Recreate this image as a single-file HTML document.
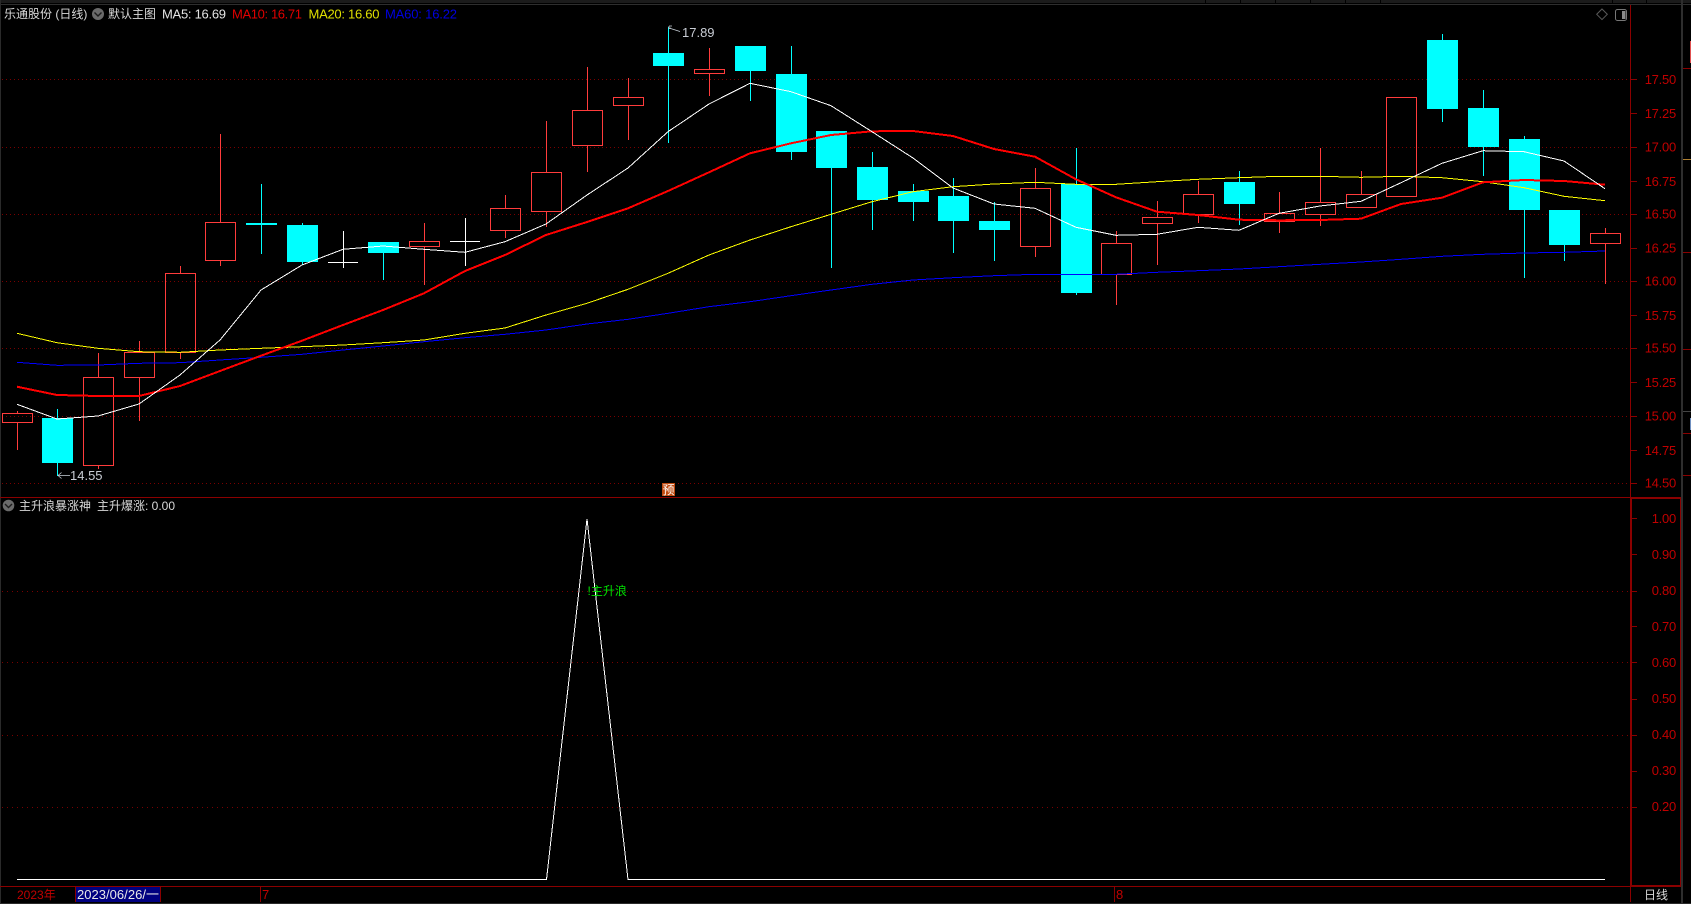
<!DOCTYPE html>
<html><head><meta charset="utf-8"><style>
html,body{margin:0;padding:0;background:#000;width:1691px;height:904px;overflow:hidden}
svg{display:block}
text{font-family:"Liberation Sans","Noto Sans CJK SC",sans-serif;font-size:13px}
.c{font-size:12px}
.ax text{fill:#c00000;text-anchor:end;letter-spacing:-.25px}
</style></head><body>
<svg width="1691" height="904" viewBox="0 0 1691 904" xmlns="http://www.w3.org/2000/svg">
<rect width="1691" height="904" fill="#000"/>
<g shape-rendering="crispEdges">
<!-- frame -->
<rect x="0" y="0" width="1691" height="3" fill="#1b1b1b"/>
<rect x="0" y="4" width="1691" height="1" fill="#2e2e2e"/>
<path d="M1612.5 0V3M1646.5 0V3M1681.5 0V3M1380.5 0V3M1345.5 0V3M1310.5 0V3M1275.5 0V3M1240.5 0V3M1205.5 0V3" stroke="#000"/>
<rect x="0" y="0" width="1" height="904" fill="#2a2a2a"/>
<rect x="1681" y="0" width="2" height="904" fill="#2e2e2e"/>
<rect x="0" y="903" width="1691" height="1" fill="#2a2a2a"/>
<!-- right strip fragments -->
<path d="M1683 68.5H1691M1683 252.5H1691M1683 349.5H1691M1683 433.5H1691M1683 475.5H1691" stroke="#8b0000"/>
<path d="M1683 159.5H1691" stroke="#b08030"/>
<path d="M1683 411.5H1691" stroke="#444"/>
<rect x="1690" y="41" width="1" height="22" fill="#e05050"/>
<rect x="1690" y="418" width="1" height="12" fill="#7090c0"/>
<!-- grid -->
<g stroke="#7a0000" stroke-dasharray="1 3" fill="none">
<path d="M2 79.5H1630M2 147.5H1630M2 214.5H1630M2 281.5H1630M2 348.5H1630M2 416.5H1630M2 483.5H1630"/>
<path d="M2 591.5H1630M2 662.5H1630M2 735.5H1630M2 807.5H1630" stroke-dasharray="1 4"/>
</g>
<!-- axes -->
<rect x="1630" y="5" width="1" height="492" fill="#8b0000"/>
<rect x="0" y="497" width="1630" height="1" fill="#8b0000"/>
<rect x="1630" y="497" width="51" height="2" fill="#8b0000"/>
<rect x="1630" y="497" width="2" height="389" fill="#8b0000"/>
<rect x="1680" y="497" width="1" height="389" fill="#8b0000"/>
<rect x="0" y="886" width="1681" height="1" fill="#8b0000"/>
<rect x="1630" y="885" width="51" height="2" fill="#8b0000"/>
<path d="M1630.5 887V902M75.5 887V902M160.5 887V902M260.5 887V902M1114.5 887V902" stroke="#8b0000"/>
<path stroke="#8b0000" d="M1631 79.5H1637M1631 113.5H1637M1631 147.5H1637M1631 181.5H1637M1631 214.5H1637M1631 248.5H1637M1631 281.5H1637M1631 315.5H1637M1631 348.5H1637M1631 382.5H1637M1631 416.5H1637M1631 450.5H1637M1631 483.5H1637M1632 518.5H1637M1632 554.5H1637M1632 591.5H1637M1632 626.5H1637M1632 662.5H1637M1632 699.5H1637M1632 735.5H1637M1632 771.5H1637M1632 807.5H1637"/>

<!-- red wicks -->
<path stroke="#ff3c3c" fill="none" d="M17.5 411V413M17.5 423V450M98.5 353V377M98.5 466V469M139.5 341V352M139.5 378V421M180.5 266V273M180.5 353V359M220.5 134V222M220.5 261V266M424.5 223V241M424.5 247V285M505.5 195V208M505.5 231V238M546.5 121V172M546.5 212V227M587.5 67V110M587.5 146V172M628.5 78V97M628.5 106V140M709.5 48V69M709.5 74V96M1035.5 168V188M1035.5 247V257M1116.5 231V243M1116.5 275V305M1157.5 201V217M1157.5 224V265M1198.5 181V194M1198.5 215V223M1279.5 192V213M1279.5 222V233M1320.5 148V202M1320.5 215V226M1361.5 171V194M1605.5 228V233M1605.5 244V284"/>
<!-- red bodies -->
<g fill="none" stroke="#ff3c3c">
<rect x="2.5" y="413.5" width="30" height="9"/>
<rect x="83.5" y="377.5" width="30" height="88"/>
<rect x="124.5" y="352.5" width="30" height="25"/>
<rect x="165.5" y="273.5" width="30" height="79"/>
<rect x="205.5" y="222.5" width="30" height="38"/>
<rect x="409.5" y="241.5" width="30" height="5"/>
<rect x="490.5" y="208.5" width="30" height="22"/>
<rect x="531.5" y="172.5" width="30" height="39"/>
<rect x="572.5" y="110.5" width="30" height="35"/>
<rect x="613.5" y="97.5" width="30" height="8"/>
<rect x="694.5" y="69.5" width="30" height="4"/>
<rect x="1020.5" y="188.5" width="30" height="58"/>
<rect x="1101.5" y="243.5" width="30" height="31"/>
<rect x="1142.5" y="217.5" width="30" height="6"/>
<rect x="1183.5" y="194.5" width="30" height="20"/>
<rect x="1264.5" y="213.5" width="30" height="8"/>
<rect x="1305.5" y="202.5" width="30" height="12"/>
<rect x="1346.5" y="194.5" width="30" height="13"/>
<rect x="1386.5" y="97.5" width="30" height="99"/>
<rect x="1590.5" y="233.5" width="30" height="10"/>
</g>
<!-- cyan wicks -->
<path stroke="#00ffff" fill="none" d="M57.5 409V476M261.5 184V254M302.5 223V265M383.5 253V280M668.5 27V143M750.5 71V101M791.5 46V160M831.5 168V268M872.5 152V230M913.5 184V221M953.5 178V253M994.5 202V261M1076.5 148V295M1239.5 171V225M1442.5 34V122M1483.5 90V176M1524.5 136V278M1564.5 245V261"/>
<!-- cyan bodies -->
<g fill="#00ffff">
<rect x="42" y="418" width="31" height="45"/>
<rect x="246" y="223" width="31" height="2"/>
<rect x="287" y="225" width="31" height="37"/>
<rect x="368" y="242" width="31" height="11"/>
<rect x="653" y="53" width="31" height="13"/>
<rect x="735" y="46" width="31" height="25"/>
<rect x="776" y="74" width="31" height="78"/>
<rect x="816" y="131" width="31" height="37"/>
<rect x="857" y="167" width="31" height="33"/>
<rect x="898" y="191" width="31" height="11"/>
<rect x="938" y="196" width="31" height="25"/>
<rect x="979" y="221" width="31" height="9"/>
<rect x="1061" y="184" width="31" height="109"/>
<rect x="1224" y="182" width="31" height="22"/>
<rect x="1427" y="40" width="31" height="69"/>
<rect x="1468" y="108" width="31" height="39"/>
<rect x="1509" y="139" width="31" height="71"/>
<rect x="1549" y="210" width="31" height="35"/>
</g>
<!-- white dojis -->
<path stroke="#fff" fill="none" d="M343.5 231V268M328 262.5H358M465.5 218V266M450 241.5H480"/>

<!-- MA lines -->
<polyline fill="none" stroke="#0000ff" stroke-width="1" points="17,362.3 57,365.3 98,365 139,363.3 180,362.7 220,360 261,357.3 302,354.3 343,350 383,346 424,341.7 465,337.7 505,334.3 546,330 587,324 628,319.3 668,313.3 709,306.7 750,301.7 791,295.7 831,290 872,284.3 913,280 953,277.7 994,275.7 1035,274.3 1076,274.3 1116,274.3 1157,272.3 1198,270.7 1239,269 1279,266.7 1320,264.3 1361,262 1401,259.3 1442,256.3 1483,254.3 1524,253 1564,252.3 1605,251"/>
<polyline fill="none" stroke="#ffff00" stroke-width="1" points="17,333.3 57,342.7 98,348.3 139,351.7 180,352.3 220,350 261,348.3 302,346.7 343,345 383,342.7 424,340 465,333.3 505,328 546,315 587,303.3 628,289.3 668,273.3 709,255 750,240 791,226.7 831,214.3 872,201.7 913,191.7 953,186.7 994,184 1035,182.3 1076,184.3 1116,184.3 1157,181.7 1198,179.3 1239,177.7 1279,176.3 1320,176.3 1361,177.3 1401,176.3 1442,177.7 1483,181.7 1524,187.7 1564,196.3 1605,200.7"/>
<polyline fill="none" stroke="#ff0000" stroke-width="2" points="17,386.7 57,395 98,396 139,396 180,386 220,371 261,355.7 302,340.7 343,325 383,310 424,293.3 465,271 505,255 546,235 587,222 628,208.3 668,191 709,172.3 750,153.3 791,143.3 831,135 872,131.3 913,131 953,136 994,149 1035,156.7 1076,179.3 1116,197.3 1157,211.7 1198,215 1239,219.7 1279,220.3 1320,220 1361,218.7 1401,204 1442,197.7 1483,182.3 1524,180 1564,181 1605,184.7"/>
<polyline fill="none" stroke="#ffffff" stroke-width="1" points="17,404.3 57,419 98,416 139,404 180,375 220,340 261,290 302,265 343,249.3 383,246 424,249.3 465,252.3 505,241.7 546,224 587,195 628,168 668,131.7 709,104 750,83.3 791,91.7 831,105.7 872,131.7 913,158 953,188 994,204 1035,208.3 1076,227.3 1116,235.3 1157,234.3 1198,227.3 1239,230.3 1279,213.3 1320,206 1361,201.3 1401,182.7 1442,163.3 1483,150.7 1524,151.7 1564,161 1605,188.7"/>

<!-- indicator line -->
<polyline fill="none" stroke="#fff" stroke-width="1" points="17,879.5 546.5,879.5 587,519 628,879.5 1605,879.5"/>

<!-- highlight date -->
<rect x="76" y="887" width="84" height="15" fill="#000080"/>
<!-- badge -->
<rect x="662" y="483" width="13" height="13" fill="#c04a10"/>
</g>

<!-- price markers -->
<path d="M669 28.5l2-.5M669 28l11 3.5" stroke="#c8d0d8" fill="none" stroke-width=".8"/>
<path d="M669 26h3M669 26v3" stroke="#c8d0d8" fill="none" stroke-width=".8"/>
<path d="M58 475.5H70M58 475.5l3.5-3M58 475.5l3.5 3" stroke="#c8d0d8" fill="none" stroke-width=".8"/>
<text x="682" y="37" fill="#c8ccd4" font-size="13">17.89</text>
<text x="70" y="480" fill="#c8ccd4" font-size="13">14.55</text>

<!-- header -->
<text class="c" x="4" y="18" fill="#d8d8d8">乐通股份 (日线)</text>
<circle cx="98" cy="14" r="6" fill="#6a6a6a"/>
<path d="M94.5 12.5l3.5 3.5 3.5-3.5" fill="none" stroke="#1c1c1c" stroke-width="1.4"/>
<text class="c" x="108" y="18" fill="#d8d8d8">默认主图</text>
<text x="162" y="18.5" fill="#e4e4e4" textLength="64">MA5: 16.69</text>
<text x="232" y="18.5" fill="#e00000" textLength="70">MA10: 16.71</text>
<text x="308.5" y="18.5" fill="#e0e000" textLength="71">MA20: 16.60</text>
<text x="385" y="18.5" fill="#0000e0" textLength="72">MA60: 16.22</text>

<!-- top right icons -->
<path d="M1602 9l5.3 5.3-5.3 5.3-5.3-5.3z" fill="none" stroke="#5a5a5a"/>
<rect x="1615.5" y="9.5" width="11" height="11" rx="2" fill="none" stroke="#777"/>
<rect x="1622" y="11" width="3.5" height="8" fill="#8a8a8a"/>

<!-- lower header -->
<circle cx="8.5" cy="505.5" r="5.8" fill="#6a6a6a"/>
<path d="M5 504l3.5 3.5 3.5-3.5" fill="none" stroke="#1c1c1c" stroke-width="1.4"/>
<text class="c" x="19" y="510" fill="#d8d8d8">主升浪暴涨神</text>
<text class="c" x="97" y="510" fill="#d8d8d8">主升爆涨: 0.00</text>

<!-- signal -->
<text class="c" x="587.5" y="595" fill="#00e000">!主升浪</text>
<text class="c" x="662.5" y="494" fill="#fff">预</text>

<!-- axis labels -->
<g class="ax">
<text x="1676" y="84">17.50</text>
<text x="1676" y="118">17.25</text>
<text x="1676" y="151.5">17.00</text>
<text x="1676" y="186">16.75</text>
<text x="1676" y="218.5">16.50</text>
<text x="1676" y="252.5">16.25</text>
<text x="1676" y="285.5">16.00</text>
<text x="1676" y="320">15.75</text>
<text x="1676" y="352.5">15.50</text>
<text x="1676" y="387">15.25</text>
<text x="1676" y="420.5">15.00</text>
<text x="1676" y="455">14.75</text>
<text x="1676" y="487.5">14.50</text>
<text x="1676" y="523">1.00</text>
<text x="1676" y="559">0.90</text>
<text x="1676" y="595">0.80</text>
<text x="1676" y="631">0.70</text>
<text x="1676" y="667">0.60</text>
<text x="1676" y="703">0.50</text>
<text x="1676" y="739">0.40</text>
<text x="1676" y="775">0.30</text>
<text x="1676" y="811">0.20</text>
</g>

<!-- bottom bar -->
<text x="17" y="899" fill="#c00000" class="c">2023年</text>
<text x="77" y="899" fill="#e8e8e8" font-size="13" textLength="82">2023/06/26/一</text>
<text x="262" y="899" fill="#c00000">7</text>
<text x="1116" y="899" fill="#c00000">8</text>
<text class="c" x="1644" y="899" fill="#d8d8d8">日线</text>
</svg>
</body></html>
